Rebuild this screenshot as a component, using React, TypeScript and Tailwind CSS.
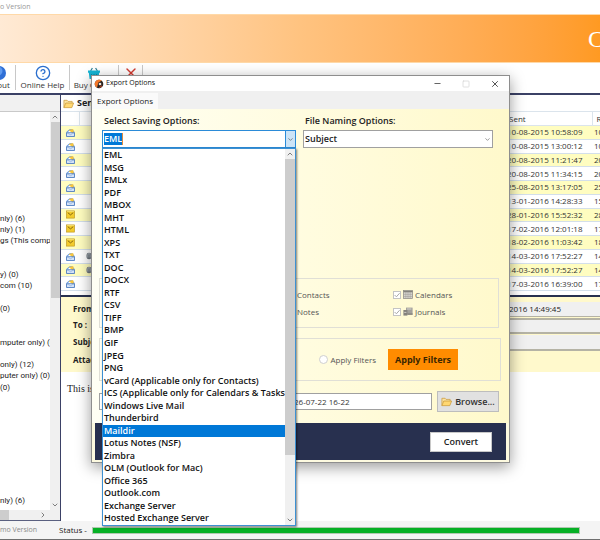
import React, { useState } from 'react';
import { X, Minus, Square, ChevronDown, ChevronUp, ChevronRight, CircleHelp } from 'lucide-react';

const FORMATS = [
  'EML', 'MSG', 'EMLx', 'PDF', 'MBOX', 'MHT', 'HTML', 'XPS', 'TXT', 'DOC', 'DOCX', 'RTF', 'CSV', 'TIFF', 'BMP', 'GIF', 'JPEG', 'PNG',
  'vCard (Applicable only for Contacts)',
  'ICS (Applicable only for Calendars & Tasks)',
  'Windows Live Mail',
  'Thunderbird',
  'Maildir',
  'Lotus Notes (NSF)',
  'Zimbra',
  'OLM (Outlook for Mac)',
  'Office 365',
  'Outlook.com',
  'Exchange Server',
  'Hosted Exchange Server',
];

interface Mail {
  sent: string;
  received: string;
  unread?: boolean;
  attachment?: boolean;
}

const MAILS: Mail[] = [
  { sent: '10-08-2015 10:58:09', received: '10' },
  { sent: '10-08-2015 13:00:12', received: '10' },
  { sent: '20-08-2015 11:21:47', received: '20' },
  { sent: '20-08-2015 11:34:15', received: '20' },
  { sent: '25-08-2015 13:17:05', received: '25' },
  { sent: '13-01-2016 14:28:33', received: '15' },
  { sent: '28-01-2016 15:52:32', received: '28', unread: true },
  { sent: '17-02-2016 12:01:18', received: '17', unread: true },
  { sent: '18-02-2016 11:03:42', received: '18', unread: true },
  { sent: '14-03-2016 17:52:27', received: '14', attachment: true },
  { sent: '14-03-2016 17:52:27', received: '14', attachment: true },
  { sent: '17-03-2016 16:39:00', received: '17' },
];

// one entry per tree row, blank rows keep their place
const FOLDERS = [
  '', '', '', '', '', '', '', '', '',
  'nly) (6)', 'nly) (1)', 'gs (This computer', '', '', 'y) (0)', 'com (10)', '', '(0)', '', '',
  'mputer only) (0)', '', 'only) (12)', 'puter only) (0)', '(0)', '', '', '', '', '', '', '', '', '',
  'nly) (6)',
];

const FolderIcon = () => (
  <svg viewBox="0 0 12 12" className="h-[11px] w-[11px] shrink-0">
    <path d="M1 10.5V2.5h3.5l1 1.2h4.5v2" fill="#fbe3a0" stroke="#c99a3c" strokeWidth=".8" />
    <path d="M1 10.5 3 5.5h8.6l-2 5z" fill="#ffd873" stroke="#c99a3c" strokeWidth=".8" />
  </svg>
);

const MailIcon = ({ unread }: { unread?: boolean }) =>
  unread ? (
    <svg viewBox="0 0 10 10" className="mx-auto h-[9px] w-[9px]">
      <rect x=".6" y="1" width="8.8" height="8" fill="#f2cb2c" stroke="#b8911a" strokeWidth=".7" />
      <path d="M2 3l3 2.4L8 3" fill="none" stroke="#7a5c0c" strokeWidth="1" />
      <path d="M1.2 1.6h7.6" stroke="#fbe98a" strokeWidth=".8" />
    </svg>
  ) : (
    <svg viewBox="0 0 10 10" className="mx-auto h-[9px] w-[9px]">
      <path d="M.6 4.2 4 1.4h3l2.4 2.8v5.2H.6z" fill="#5f93dc" />
      <path d="M3.4 2.2 8 1l.8 4.6H3.4z" fill="#f8c63c" />
      <path d="M1.2 4.6 4 3l3.6 3H1.2z" fill="#fff" />
      <path d="M.6 5.2h8.8v4.2H.6z" fill="#dbe8fa" stroke="#3569b4" strokeWidth=".8" />
      <path d="M1 5.4 5 7.4l4-2" fill="none" stroke="#7ba3dc" strokeWidth=".7" />
    </svg>
  );

const AttachmentIcon = () => (
  <svg viewBox="0 0 10 10" className="ml-[6px] h-2 w-2">
    <ellipse cx="5" cy="5" rx="3.2" ry="4" fill="#6c747c" />
    <path d="M3.6 7V3.4a1.4 1.4 0 0 1 2.8 0V7" fill="none" stroke="#c8d0d8" strokeWidth=".9" />
  </svg>
);

const GlobeIcon = () => (
  <svg viewBox="0 0 14 14" className="h-[14px] w-[14px]">
    <circle cx="7" cy="7" r="7" fill="#2f6fd6" />
    <circle cx="6" cy="5" r="4.5" fill="#5f9bf0" />
  </svg>
);

const BasketIcon = () => (
  <svg viewBox="0 0 14 14" className="h-[14px] w-[14px]">
    <path d="M3.6 5 5.4 2M10.4 5 8.6 2" stroke="#287f96" strokeWidth="1.2" />
    <path d="M1 4.6h12v2.2h-.8L11.4 13H2.6l-.8-6.2H1z" fill="#14b4d4" />
    <path d="M4.4 8v3.4M7 8v3.4M9.6 8v3.4" stroke="#0b7d96" strokeWidth=".9" />
  </svg>
);

const AppIcon = () => (
  <svg viewBox="0 0 10 10" className="h-[10px] w-[10px]">
    <circle cx="5" cy="5" r="4.3" fill="#2a2422" />
    <path d="M.7 5A4.3 4.3 0 0 1 5 .7c1.2 0 2 .4 2.6 1L4.4 3.6 3 8.8A4.3 4.3 0 0 1 .7 5z" fill="#f4782a" />
    <circle cx="6" cy="5" r="1.3" fill="#f6e5d8" />
    <path d="M5.4 8.6 8 6.8" stroke="#d9451f" strokeWidth="1" />
  </svg>
);

const CalendarIcon = () => (
  <svg viewBox="0 0 10 9" className="h-[9px] w-[10px]">
    <rect x=".4" y=".4" width="9.2" height="8.2" fill="#d6d4ce" stroke="#8a8882" strokeWidth=".7" />
    <path d="M.4 1.6h9.2" stroke="#84827c" strokeWidth="1.4" />
    <path d="M.4 4.4h9.2M.4 6.5h9.2M2.8 2v6.6M5 2v6.6M7.2 2v6.6" stroke="#9c9a94" strokeWidth=".5" />
  </svg>
);

const JournalIcon = () => (
  <svg viewBox="0 0 10 9" className="h-[9px] w-[10px]">
    <path d="M3 .6h6.6v7H3z" fill="#a3a19b" />
    <path d="M.4 3h4v5.6h-4z" fill="#84827c" />
    <path d="M4.4 6.4h5.2v1.4H4.4z" fill="#84827c" />
    <path d="M4 2h4.4M1.2 5.4h2.2" stroke="#e2e0da" strokeWidth=".8" />
  </svg>
);

interface ToolButtonProps {
  label: string;
  icon: React.ReactNode;
  className: string;
  iconOnly?: boolean;
}

const ToolButton: React.FC<ToolButtonProps> = ({ label, icon, className, iconOnly }) => (
  <button type="button" aria-label={label} className={`mt-[2px] mb-[3px] flex shrink-0 flex-col items-center border-r border-[#c8c8c8] text-[8px] leading-[10px] whitespace-nowrap text-[#333] ${className}`}>
    <span className="flex h-[15px] items-center">{icon}</span>
    {!iconOnly && <span>{label}</span>}
  </button>
);

const FolderTree = () => (
  <aside className="flex w-[61px] shrink-0 flex-col border-r border-[#3b4166] bg-white">
    <div className="h-[17px] shrink-0 border-b border-[#c9c9c9] bg-[#f1f1f1]" />
    <div className="flex min-h-0 flex-1">
      <ul className="flex h-[395px] min-w-0 flex-1 flex-col overflow-hidden font-['Roboto',sans-serif] text-[8px] leading-[10px] text-[#222]">
        {FOLDERS.map((name, i) => (
          <li key={i} className="flex-1 whitespace-nowrap">{name}</li>
        ))}
      </ul>
      <div className="flex w-[10px] shrink-0 flex-col items-center bg-[#f0f0f0]">
        <ChevronUp size={8} className="my-px text-[#444]" />
        <div className="mb-auto h-[176px] w-[9px] bg-[#cdcdcd]" />
        <ChevronDown size={8} className="my-px text-[#444]" />
      </div>
    </div>
    <div className="flex h-[10px] shrink-0 items-center bg-[#f0f0f0]">
      <div className="h-full w-[9px] bg-[#cdcdcd]" />
      <ChevronRight size={8} className="ml-[30px] text-[#444]" />
    </div>
    <div className="h-px bg-[#5a6080]" />
  </aside>
);

const MailTable = () => (
  <table className="h-[180px] w-full table-fixed border-collapse text-left text-[8px] leading-[8px] text-[#333]">
    <colgroup>
      <col className="w-[18px]" />
      <col className="w-[18px]" />
      <col />
      <col className="w-[85px]" />
      <col className="w-[8px]" />
    </colgroup>
    <thead>
      <tr className="h-[14px] border-y border-[#dbe4ec]">
        <th className="border-r border-[#dbe4ec] p-0" />
        <th className="p-0" />
        <th className="p-0" />
        <th className="border-r border-[#dbe4ec] p-0 pl-[2px] font-normal">Sent</th>
        <th className="overflow-hidden p-0 pl-1 font-normal">Received</th>
      </tr>
    </thead>
    <tbody>
      {MAILS.map((mail, i) => (
        <tr key={i} className="border-b border-[#d3dfea] odd:bg-[#fffdc0]">
          <td className="p-0"><MailIcon unread={mail.unread} /></td>
          <td className="p-0">{mail.attachment && <AttachmentIcon />}</td>
          <td className="p-0" />
          <td className="p-0 pr-3 text-right whitespace-nowrap">{mail.sent}</td>
          <td className="overflow-hidden p-0 pl-[2px]">{mail.received}</td>
        </tr>
      ))}
    </tbody>
  </table>
);

const MessagePreview = () => (
  <div className="flex flex-1 flex-col border-t-2 border-[#27304f] bg-white">
    <dl className="grid h-[75px] grid-cols-[60px_1fr] grid-rows-[16px_17px_18px_1fr] bg-[#fff9cc] pt-[5px] text-[8px] leading-[14px] font-bold whitespace-nowrap text-[#222]">
      <dt className="pl-[12px]">From :</dt>
      <dd className="mb-px border-b border-[#b5b3a5] bg-[#f0f0f0] pr-[39px] text-right font-normal">18-03-2016 14:49:45</dd>
      <dt className="pl-[12px]">To :</dt>
      <dd className="mb-px border-y-2 border-[#b5b3a5] bg-[#f0f0f0]" />
      <dt className="pl-[12px]">Subject :</dt>
      <dd className="mb-[2px] border-b-2 border-[#b5b3a5] bg-[#f0f0f0]" />
      <dt className="pl-[12px]">Attachments :</dt>
      <dd />
    </dl>
    <p className="px-[6px] pt-[10px] font-['Liberation_Serif',serif] text-[10px] leading-[14px] text-[#222]">This is</p>
  </div>
);

const CheckItem = ({ label, icon }: { label: string; icon: React.ReactNode }) => (
  <label className="flex items-center gap-[2px]">
    <span className="relative flex">
      <input type="checkbox" defaultChecked className="h-[8px] w-[8px] appearance-none border border-[#c4c4c4] bg-white" />
      <svg viewBox="0 0 8 8" className="pointer-events-none absolute inset-0 h-[8px] w-[8px]">
        <path d="M1.6 4 3.4 5.8 6.6 2.2" fill="none" stroke="#a8a8a8" strokeWidth="1" />
      </svg>
    </span>
    {icon}
    <span>{label}</span>
  </label>
);

const ExportDialog = () => {
  const [format, setFormat] = useState('EML');
  const [active, setActive] = useState('Maildir');

  return (
    <div role="dialog" aria-label="Export Options" className="absolute top-[75px] left-[91px] flex w-[419px] flex-col border border-[#8e8e8e] bg-white shadow-[0_4px_14px_rgba(0,0,0,0.4)]">
      <div className="flex h-[15px] items-center pl-[2px] text-[7px] text-[#111]">
        <AppIcon />
        <span className="ml-[2px]">Export Options</span>
        <button type="button" aria-label="Minimize" className="mr-[20px] ml-auto"><Minus size={9} className="text-[#333]" /></button>
        <button type="button" aria-label="Maximize" className="mr-[20px]"><Square size={8} className="text-[#d0d0d0]" /></button>
        <button type="button" aria-label="Close" className="mr-[9px]"><X size={10} className="text-[#333]" /></button>
      </div>
      <div role="tablist" className="flex h-[18px] bg-[#f0f0f0] pt-[2px]">
        <button type="button" role="tab" aria-selected="true" className="bg-[#fafafa] px-[5px] text-[8px] text-[#222]">Export Options</button>
      </div>

      <div className="flex flex-col bg-linear-to-r from-[#fffff4] to-[#fff9cb] pr-[8px] pl-[7px] text-[8px] text-[#555]">
        <div className="grid grid-cols-[194px_1fr] gap-x-[7px] pt-[5px] pr-[8px] pl-[3px] font-semibold text-[#222]">
          <label htmlFor="format" className="h-[16px] pl-[2px] text-[9px] leading-[14px]">Select Saving Options:</label>
          <label htmlFor="naming" className="h-[16px] pl-[2px] text-[9px] leading-[14px]">File Naming Options:</label>
          <div className="relative flex h-[18px] border border-[#2b8bd8] bg-white">
            <input
              id="format"
              role="combobox"
              aria-expanded="true"
              value={format}
              onChange={(e) => setFormat(e.target.value)}
              className="my-[2px] ml-px w-[19px] border-r border-[#e08a3c] bg-[#0078d7] text-[9px] text-white outline-none"
            />
            <button type="button" aria-label="Show formats" className="ml-auto flex w-[10px] items-center justify-center border-l border-[#2b8bd8] bg-[#cce4f7]">
              <ChevronDown size={7} className="text-[#444]" />
            </button>
            <div className="absolute top-[17px] -left-px z-10 flex h-[378px] w-[194px] border border-[#3c90d2] bg-white shadow-[1px_1px_2px_rgba(0,0,0,0.5)]">
              <ul role="listbox" className="flex min-w-0 flex-1 flex-col overflow-hidden text-[9px] leading-[12px] text-[#111]">
                {FORMATS.map((name) => (
                  <li
                    key={name}
                    role="option"
                    aria-selected={name === active}
                    onMouseEnter={() => setActive(name)}
                    onClick={() => setFormat(name)}
                    className={`flex-1 pl-px whitespace-nowrap ${name === active ? 'bg-[#0078d7] text-white' : ''}`}
                  >
                    {name}
                  </li>
                ))}
              </ul>
              <div className="flex w-[10px] shrink-0 flex-col items-center bg-[#f0f0f0]">
                <ChevronUp size={8} className="my-px text-[#444]" />
                <div className="mb-auto h-[296px] w-full bg-[#cdcdcd]" />
                <ChevronDown size={8} className="my-px text-[#444]" />
              </div>
            </div>
          </div>
          <div className="relative">
            <select id="naming" className="block h-[18px] w-full appearance-none border border-[#a0a0a0] bg-white pl-px text-[9px] font-semibold text-[#222]">
              <option>Subject</option>
            </select>
            <ChevronDown size={7} className="pointer-events-none absolute top-[6px] right-[2px] text-[#555]" />
          </div>
        </div>

        <div role="group" aria-label="Items to export" className="mt-[130px] mr-[2px] grid h-[50px] grid-cols-[106px_1fr] content-center gap-y-[5px] border border-[#e0dfd6] pl-[187px] leading-[12px]">
          <label className="flex items-center gap-[2px]">
            <input type="checkbox" defaultChecked className="sr-only" />
            <span className="ml-[10px]">Contacts</span>
          </label>
          <CheckItem label="Calendars" icon={<CalendarIcon />} />
          <label className="flex items-center gap-[2px]">
            <input type="checkbox" defaultChecked className="sr-only" />
            <span className="ml-[10px]">Notes</span>
          </label>
          <CheckItem label="Journals" icon={<JournalIcon />} />
        </div>

        <div role="group" aria-label="Filters" className="mt-[10px] flex h-[43px] items-center justify-end border border-[#e0dfd6] pr-[42px]">
          <label className="mr-[12px] flex items-center gap-[2px]">
            <input type="radio" name="filters" className="h-[9px] w-[9px] appearance-none rounded-full border border-[#cfcfcf] bg-white" />
            Apply Filters
          </label>
          <button type="button" className="h-[21px] w-[70px] bg-[#ff8c00] text-[9px] font-bold text-[#3a2600]">Apply Filters</button>
        </div>

        <div className="mt-[10px] flex items-center gap-[5px] pr-[2px] pb-[11px] text-[#333]">
          <input
            aria-label="Destination path"
            defaultValue="26-07-22 16-22"
            className="h-[17px] min-w-0 flex-1 border border-[#a0a0a0] bg-white pl-[194px] outline-none"
          />
          <button type="button" className="flex h-[21px] w-[62px] items-center justify-center gap-[3px] border border-[#bdbdbd] bg-[#e1e1e1] text-[9px] font-semibold">
            <FolderIcon />
            Browse...
          </button>
        </div>
      </div>

      <div className="border-x-3 border-b-2 border-[#fdfae0] bg-[#28304f]">
        <div className="flex h-[37px] items-center justify-end pr-[14px]">
          <button type="button" className="h-[20px] w-[62px] border border-[#c8c8c8] bg-white text-[9px] font-semibold text-[#222]">Convert</button>
        </div>
      </div>
    </div>
  );
};

const App: React.FC = () => {
  return (
    <div className="relative flex h-screen w-full flex-col overflow-hidden bg-white font-['Open_Sans','Noto_Sans',sans-serif] text-[#222]">
      <div className="h-[14px] shrink-0 text-[7px] leading-[14px] whitespace-nowrap text-[#999]">o Version</div>
      <header className="flex h-[49px] shrink-0 items-center border-y border-[#ffd9a8] bg-linear-to-r from-[#ffead5] via-[#ffc380] to-[#ff9a22]">
        <h1 className="ml-auto w-[12px] font-['Liberation_Serif',serif] text-[24px] leading-[28px] text-white">C</h1>
      </header>
      <nav className="flex h-[30px] shrink-0">
        <ToolButton label="About" icon={<GlobeIcon />} className="-ml-[18px] w-[34px]" />
        <ToolButton label="Online Help" icon={<CircleHelp size={16} className="text-[#2b6fce]" />} className="w-[54px]" />
        <ToolButton label="Buy Online" icon={<BasketIcon />} className="w-[49px]" />
        <ToolButton label="Exit" icon={<X size={16} className="text-[#d13a30]" />} className="w-[24px]" iconOnly />
      </nav>

      <main className="flex min-h-0 flex-1 border-t-2 border-[#3b4166]">
        <FolderTree />
        <section className="flex min-w-0 flex-1 flex-col">
          <h2 className="flex h-[16px] shrink-0 items-center gap-[3px] pl-[2px] text-[9px] font-bold">
            <FolderIcon />
            Sent Items
          </h2>
          <MailTable />
          <div className="h-[4px] shrink-0" />
          <MessagePreview />
        </section>
      </main>

      <footer className="flex h-[19px] shrink-0 items-center border-b border-[#6e6e6e] bg-[#f4f4f4] pr-[20px] text-[8px]">
        <span className="w-[59px] shrink-0 text-[7px] text-[#8a8a8a]">mo Version</span>
        <span className="w-[33px] shrink-0">Status -</span>
        <div role="progressbar" aria-label="Status" className="h-[7px] flex-1 border border-[#b0c8b0] bg-[#06b025]" />
      </footer>

      <ExportDialog />
    </div>
  );
};

export default App;
